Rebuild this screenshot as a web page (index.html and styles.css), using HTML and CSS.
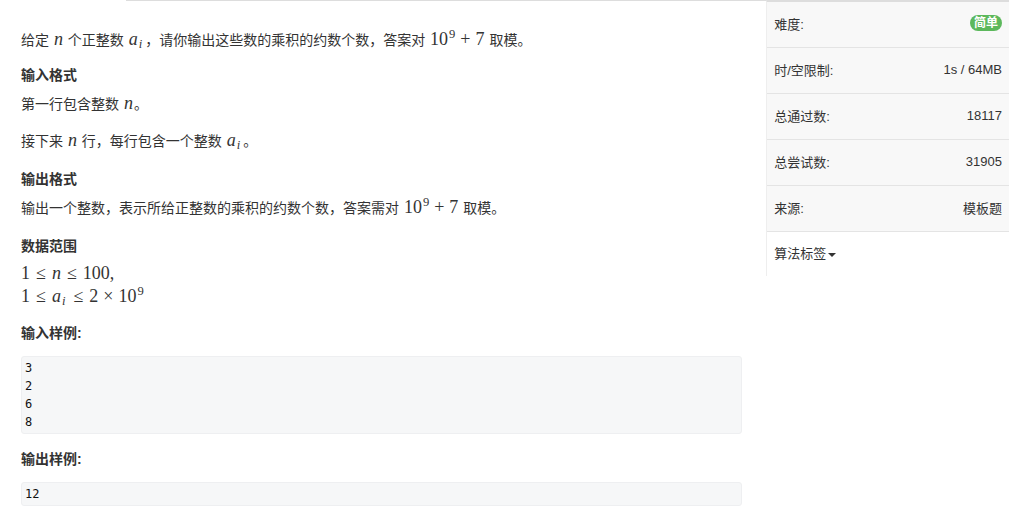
FILE: index.html
```html
<!DOCTYPE html>
<html lang="zh-CN">
<head>
    <meta charset="UTF-8">
    <title>约数个数</title>
    <link rel="stylesheet" href="styles.css">
</head>
<body>
    <div class="page">
        <div class="main">
            <div class="tabline"></div>
            <p class="first">给定 <span class="m"><i>n</i></span> 个正整数 <span class="m"><i>a</i><sub>i</sub></span>，请你输出这些数的乘积的约数个数，答案对 <span class="m">10<sup>9</sup><span class="bin">+</span>7</span> 取模。</p>

            <h4>输入格式</h4>
            <p>第一行包含整数 <span class="m"><i>n</i></span>。</p>
            <p class="gap">接下来 <span class="m"><i>n</i></span> 行，每行包含一个整数 <span class="m"><i>a</i><sub>i</sub></span>。</p>

            <h4>输出格式</h4>
            <p>输出一个整数，表示所给正整数的乘积的约数个数，答案需对 <span class="m">10<sup>9</sup><span class="bin">+</span>7</span> 取模。</p>

            <h4>数据范围</h4>
            <div class="range">
                <div>1<span class="rel">≤</span><i>n</i><span class="rel">≤</span>100,</div>
                <div>1<span class="rel">≤</span><i>a</i><sub>i</sub><span class="rel">≤</span>2<span class="bin">×</span>10<sup>9</sup></div>
            </div>

            <h4 class="after-range">输入样例:</h4>
            <pre class="sample">3
2
6
8</pre>

            <h4>输出样例:</h4>
            <pre class="sample">12</pre>
        </div>

        <div class="side">
            <div class="row"><span>难度:</span><span class="badge">简单</span></div>
            <div class="row"><span>时/空限制:</span><span>1s / 64MB</span></div>
            <div class="row"><span>总通过数:</span><span>18117</span></div>
            <div class="row"><span>总尝试数:</span><span>31905</span></div>
            <div class="row"><span>来源:</span><span>模板题</span></div>
            <div class="row tags"><span>算法标签<span class="caret"></span></span></div>
        </div>
    </div>
</body>
</html>
```

FILE: styles.css
```css
body {
    margin: 0;
    font-family: 'Liberation Sans', Arial, 'Noto Sans CJK SC', sans-serif;
    font-size: 14px;
    color: #333;
    background: #fff;
}
.page {
    display: flex;
    width: 1009px;
}
.main {
    width: 767px;
    box-sizing: border-box;
    padding: 0 24px 0 21px;
}
.tabline {
    height: 1px;
    background: #ddd;
    margin: 0 -24px 0 105px;
}
p {
    margin: 0;
    line-height: 20px;
}
p.first {
    margin-top: 29px;
    margin-bottom: -3px;
}
p.gap {
    margin-top: 17px;
}
h4 {
    margin: 18px 0 9px;
    font-size: 14px;
    line-height: 20px;
    font-weight: bold;
}
h4.after-range {
    margin-top: 15px;
}
.m {
    font-family: 'Liberation Serif', 'Times New Roman', serif;
    font-size: 18px;
    line-height: 0;
    padding: 0 1px;
}
.m i, .range i {
    font-style: italic;
}
.bin {
    margin: 0 5px;
}
.rel {
    margin: 0 6px;
}
sub {
    font-size: 0.7em;
    font-style: italic;
    line-height: 0;
    vertical-align: -3px;
    margin: 0 2px 0 1px;
}
sup {
    font-size: 0.7em;
    line-height: 0;
    vertical-align: 7px;
    margin-left: 1px;
}
.range {
    font-family: 'Liberation Serif', 'Times New Roman', serif;
    font-size: 18px;
    line-height: 23px;
    margin-top: -3px;
}
.sample {
    margin: 13px 0 0;
    padding: 2px 3px 2px;
    background: #f6f7f8;
    border: 1px solid #eeeff1;
    border-radius: 3px;
    font-family: 'DejaVu Sans Mono', 'Liberation Mono', monospace;
    font-size: 12px;
    line-height: 18px;
    color: #111;
}
.sample + h4 {
    margin-top: 15px;
}
.side {
    width: 242px;
    border-left: 1px solid #eee;
    border-top: 2px solid #ddd;
    font-size: 13px;
    align-self: flex-start;
}
.row {
    display: flex;
    justify-content: space-between;
    align-items: center;
    height: 46px;
    box-sizing: border-box;
    padding: 0 7px 3px 7px;
    background: #f8f8f8;
    border-bottom: 1px solid #e4e4e4;
}
.row.tags {
    background: #fff;
    border-bottom: none;
    height: 44px;
}
.badge {
    background: #5cb85c;
    color: #fff;
    font-weight: bold;
    font-size: 12px;
    line-height: 16px;
    padding: 0 4px;
    border-radius: 8px;
}
.caret {
    display: inline-block;
    width: 0;
    height: 0;
    margin-left: 2px;
    vertical-align: middle;
    border-top: 4px solid #333;
    border-left: 4px solid transparent;
    border-right: 4px solid transparent;
}
```
